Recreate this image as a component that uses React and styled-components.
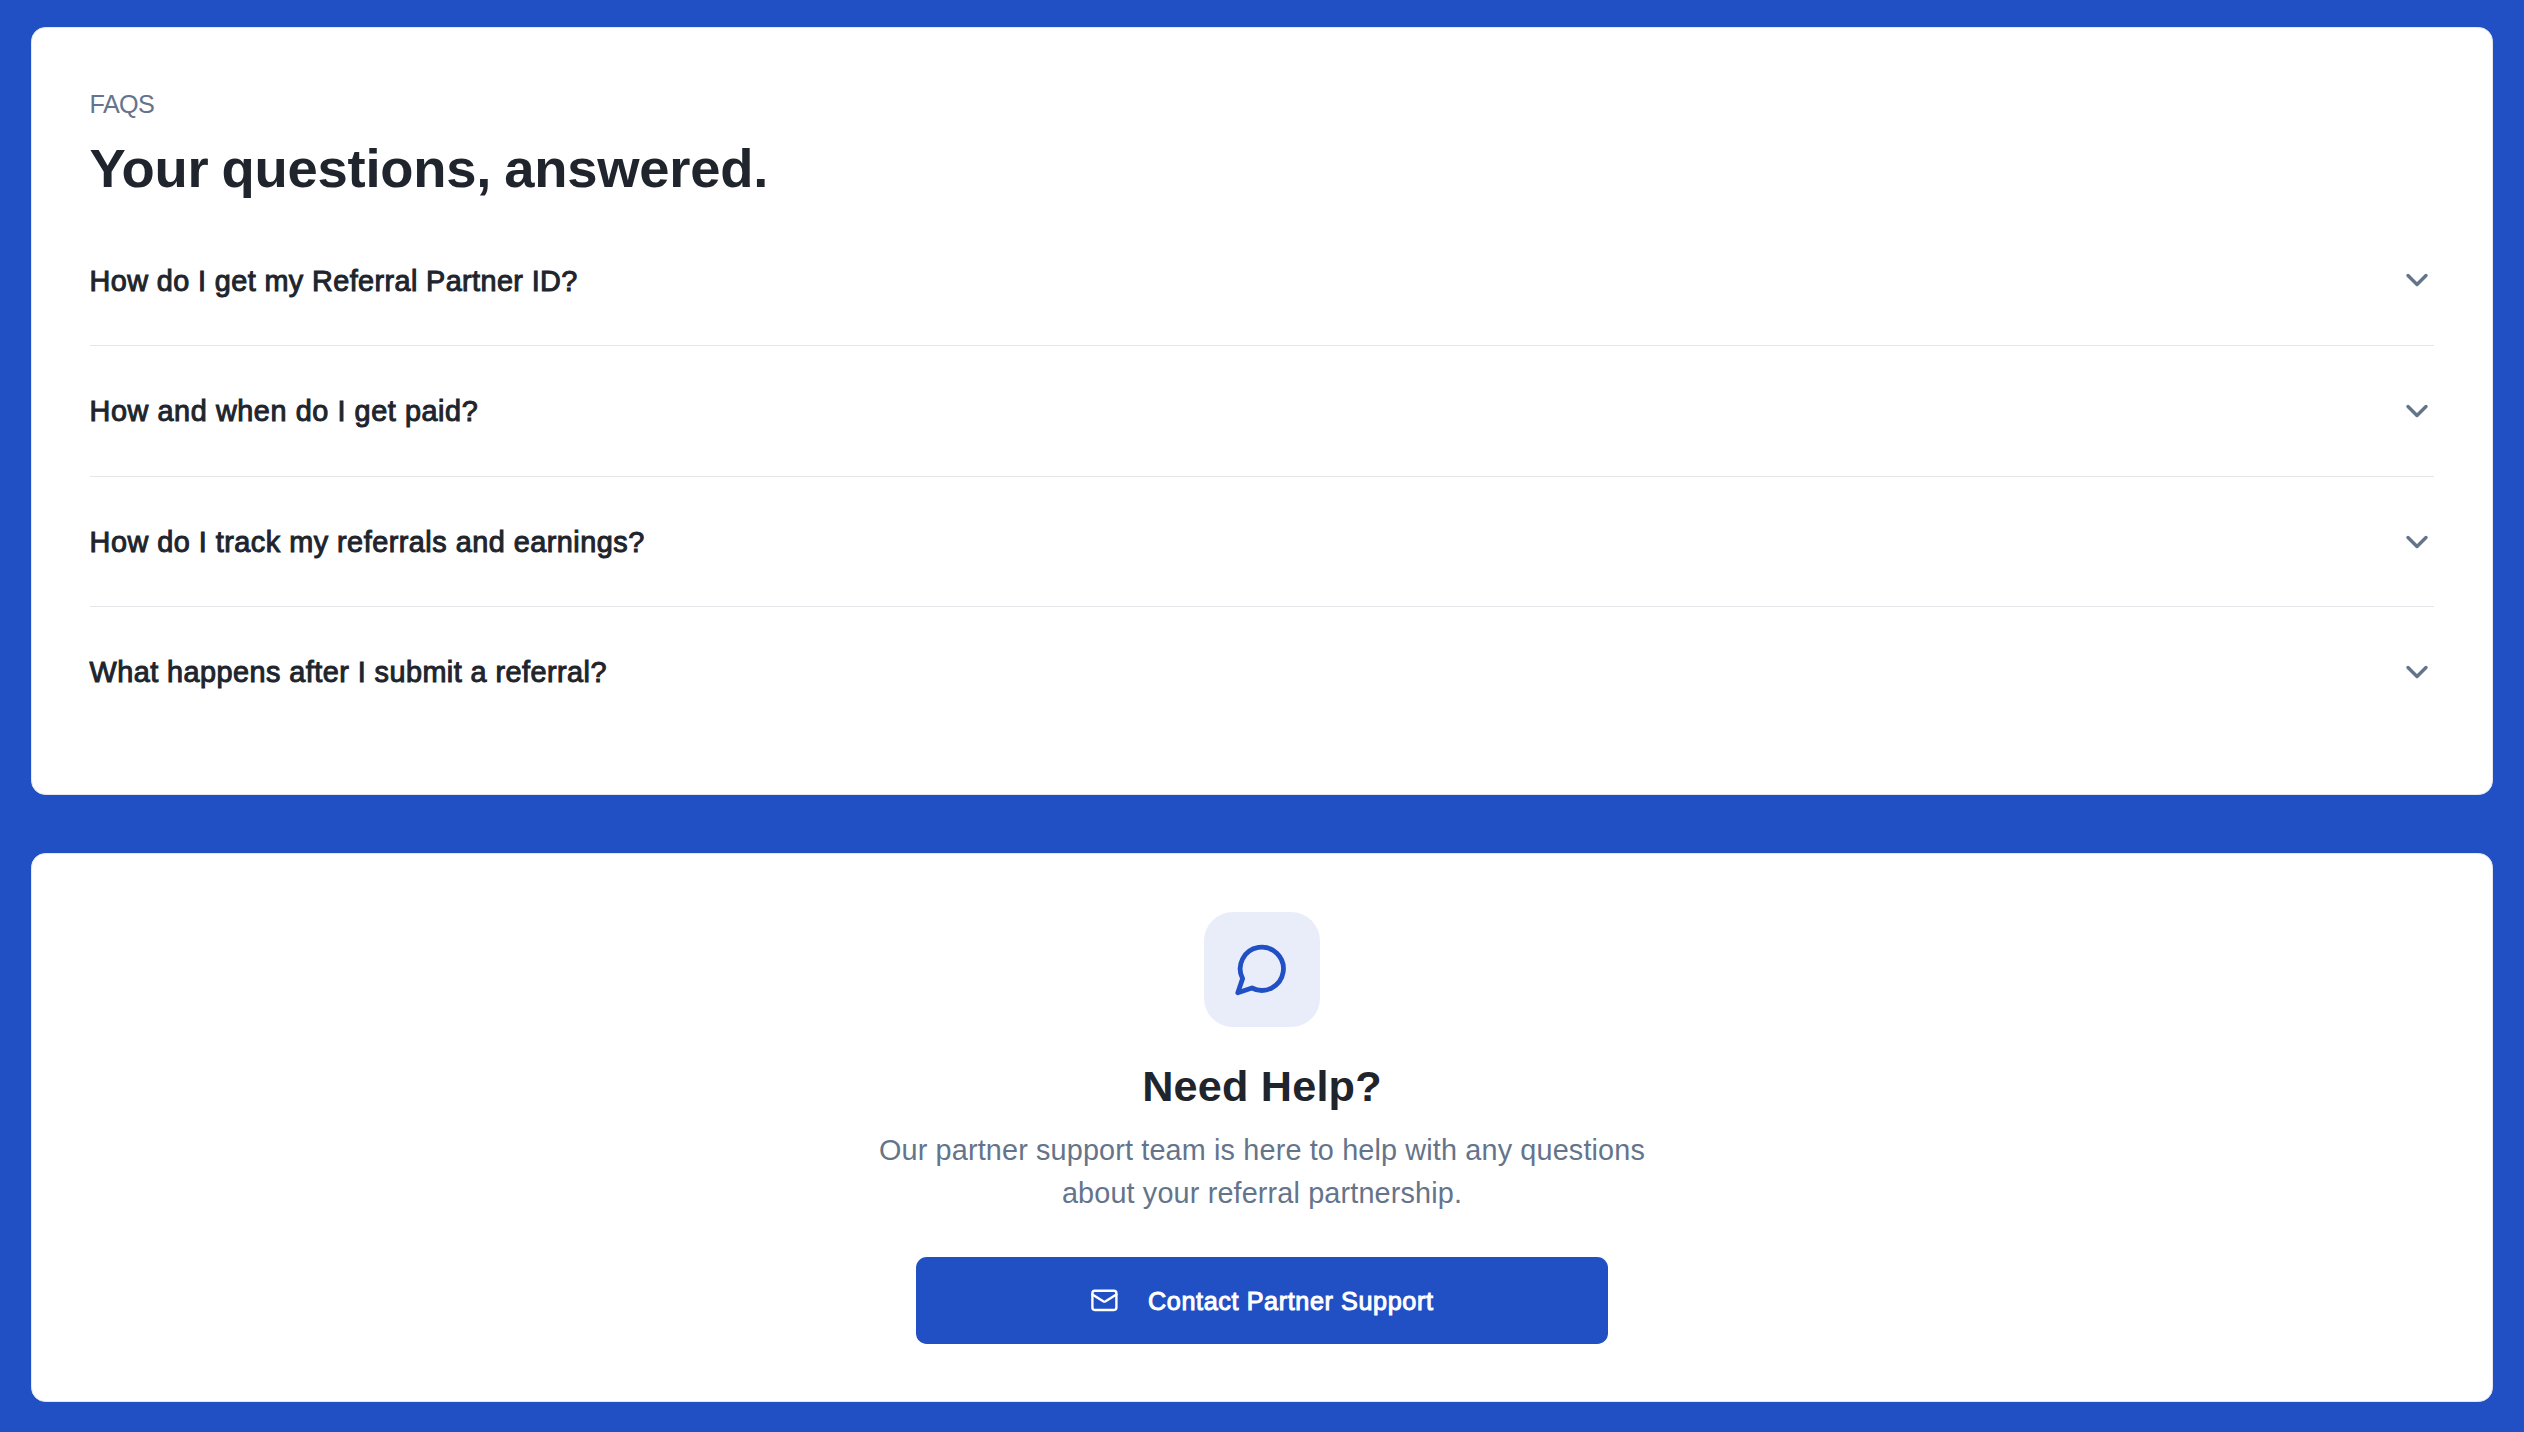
import React from "react";
import styled, { createGlobalStyle, css } from "styled-components";
import { ChevronDown, Mail } from "lucide-react";

const GlobalStyle = createGlobalStyle`
  * {
    box-sizing: border-box;
  }

  body {
    background: #2050c4;
    font-family: "Liberation Sans", Arial, sans-serif;
    margin: 0;
  }
`;

const Medium = css`
  font-weight: 400;
  -webkit-text-stroke: 1px currentColor;
`;

const Page = styled.main`
  display: flex;
  flex-direction: column;
  gap: 57.6px;
  min-height: 1432px;
  padding: 27px 31px 30px;
`;

const Card = styled.section`
  background: #fff;
  border: 1px solid #e5e7eb;
  border-radius: 14.4px;
  padding: 57.6px 57.6px 57.4px;
`;

const Eyebrow = styled.p`
  color: #64748b;
  font-size: 25.2px;
  letter-spacing: -0.7px;
  line-height: 36px;
  margin: 0 0 14.4px;
`;

const Title = styled.h2`
  color: #20242c;
  font-size: 54.4px;
  font-weight: 700;
  letter-spacing: -0.22px;
  line-height: 64.8px;
  margin: 0 0 13.75px;
  padding-top: 1px;
  word-spacing: -2px;
`;

const FaqList = styled.div`
  display: flex;
  flex-direction: column;
`;

const FaqItem = styled.button`
  align-items: center;
  background: none;
  border: 0;
  color: #20242c;
  display: flex;
  font-family: inherit;
  font-size: 28.8px;
  height: 129.6px;
  justify-content: space-between;
  padding: 0;
  text-align: left;
  ${Medium};

  & + & {
    border-top: 1px solid #e5e7eb;
    height: 130.6px;
  }

  svg {
    color: #64748b;
    margin-right: -0.6px;
  }
`;

const Label = styled.span`
  letter-spacing: ${({ $tracking }) => $tracking};
  padding-top: 1.7px;
`;

const HelpCard = styled(Card)`
  align-items: center;
  display: flex;
  flex-direction: column;
  padding: 58px 57.6px 57px;
`;

const IconTile = styled.div`
  align-items: center;
  background: #e9edf9;
  border-radius: 28.8px;
  color: #2050c4;
  display: flex;
  height: 115.2px;
  justify-content: center;
  padding: 0 0.8px 0.8px 0;
  width: 115.2px;
`;

const HelpTitle = styled.h3`
  color: #20242c;
  font-size: 43.2px;
  font-weight: 700;
  letter-spacing: 0.2px;
  line-height: 57.6px;
  margin: 28.8px 0 13.5px;
  padding-top: 2px;
`;

const HelpText = styled.p`
  color: #64748b;
  font-size: 28.8px;
  letter-spacing: 0.15px;
  line-height: 43.2px;
  margin: 0 0 41.8px;
  text-align: center;
  width: 806px;
`;

const ContactButton = styled.button`
  align-items: center;
  background: #2050c4;
  border: 0;
  border-radius: 10.8px;
  color: #fff;
  display: flex;
  font-family: inherit;
  font-size: 25.2px;
  gap: 28.8px;
  height: 86.8px;
  justify-content: center;
  padding: 0;
  width: 691.2px;
  ${Medium};
`;

const MessageIcon = () => (
  <svg
    width="57.6"
    height="57.6"
    viewBox="0 0 24 24"
    fill="none"
    stroke="currentColor"
    strokeWidth="2"
    strokeLinecap="round"
    strokeLinejoin="round"
  >
    <path d="M7.9 20A9 9 0 1 0 4 16.1L2 22Z" />
  </svg>
);

const faqs = [
  { question: "How do I get my Referral Partner ID?", tracking: "0.4px" },
  { question: "How and when do I get paid?", tracking: "0.58px" },
  { question: "How do I track my referrals and earnings?", tracking: "0.5px" },
  { question: "What happens after I submit a referral?", tracking: "0.46px" }
];

const App = () => (
  <>
    <GlobalStyle />
    <Page>
      <Card>
        <Eyebrow>FAQS</Eyebrow>
        <Title>Your questions, answered.</Title>
        <FaqList>
          {faqs.map(({ question, tracking }) => (
            <FaqItem key={question} type="button">
              <Label $tracking={tracking}>{question}</Label>
              <ChevronDown size={36} strokeWidth={2.3} />
            </FaqItem>
          ))}
        </FaqList>
      </Card>
      <HelpCard>
        <IconTile>
          <MessageIcon />
        </IconTile>
        <HelpTitle>Need Help?</HelpTitle>
        <HelpText>
          Our partner support team is here to help with any questions about your
          referral partnership.
        </HelpText>
        <ContactButton type="button">
          <Mail size={28.8} />
          <Label $tracking="0.6px">Contact Partner Support</Label>
        </ContactButton>
      </HelpCard>
    </Page>
  </>
);

export default App;
